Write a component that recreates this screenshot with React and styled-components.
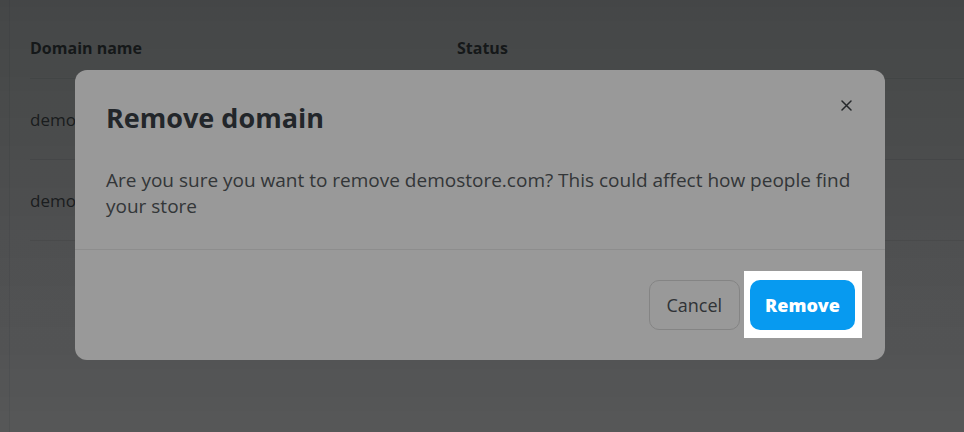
import styled, { createGlobalStyle } from "styled-components";

const GlobalStyle = createGlobalStyle`
  html, body {
    margin: 0;
    padding: 0;
    height: 100%;
    overflow: hidden;
    background: #ffffff;
    font-family: "Open Sans", "Noto Sans", Arial, sans-serif;
  }
`;

const Page = styled.div`
  min-height: 100vh;
  margin-left: 9px;
  border-left: 1px solid #eceef0;
  padding: 36px 0 0 20px;
  box-sizing: border-box;
`;

const TableHead = styled.div`
  display: grid;
  grid-template-columns: 427px 1fr;
  padding-bottom: 18px;
  border-bottom: 1px solid #e8e9ea;
  font-size: 16px;
  font-weight: 700;
  line-height: 24px;
  color: #3b3f42;
`;

const TableRow = styled.div`
  display: grid;
  grid-template-columns: 427px 1fr;
  align-items: center;
  height: 80px;
  border-bottom: 1px solid #e8e9ea;
  font-size: 17px;
  color: #4a4d50;
`;

const Backdrop = styled.div`
  position: fixed;
  inset: 0;
  display: flex;
  align-items: center;
  justify-content: center;
  padding: 0 4px 2px 0;
  background: linear-gradient(
    180deg,
    rgba(22, 26, 28, 0.6) 0%,
    rgba(22, 26, 28, 0.48) 100%
  );
`;

const Modal = styled.div`
  position: relative;
  width: 810px;
  background: #ffffff;
  border-radius: 12px;
`;

const ModalHeader = styled.div`
  display: flex;
  align-items: flex-start;
  justify-content: space-between;
  padding: 28px 29px 0 31px;
`;

const Title = styled.h2`
  margin: 0;
  font-size: 27px;
  line-height: 40px;
  font-weight: 700;
  color: #3a4047;
`;

const CloseButton = styled.button`
  display: flex;
  align-items: center;
  justify-content: center;
  width: 20px;
  height: 20px;
  margin-top: -3px;
  padding: 0;
  border: none;
  background: none;
  color: #3f4448;
  cursor: pointer;
`;

const Body = styled.p`
  margin: 0;
  padding: 29px 30px 30px 31px;
  font-size: 19px;
  line-height: 26px;
  color: #555a5e;
  border-bottom: 1px solid #ececec;
`;

const Footer = styled.div`
  display: flex;
  justify-content: flex-end;
  align-items: center;
  gap: 4px;
  padding: 30px;
`;

const CancelButton = styled.button`
  height: 50px;
  padding: 0 17px 0 16px;
  border: 1px solid #dcdcdc;
  border-radius: 10px;
  background: #ffffff;
  font-family: inherit;
  font-size: 18px;
  color: #50555a;
  cursor: pointer;
`;

const Spotlight = styled.span`
  position: relative;
  z-index: 2;
  display: inline-flex;
  margin-left: 6px;

  &::before {
    content: "";
    position: absolute;
    top: -9px;
    bottom: -8px;
    left: -6px;
    right: -7px;
    z-index: -1;
    background: #ffffff;
    box-shadow: 0 0 0 3000px rgba(0, 0, 0, 0.4);
  }
`;

const RemoveButton = styled.button`
  height: 50px;
  padding: 0 15px;
  border: none;
  border-radius: 10px;
  background: #079af0;
  font-family: inherit;
  font-size: 18px;
  font-weight: 800;
  color: #ffffff;
  cursor: pointer;
`;

const domains = [
  { name: "demostore.com", status: "Connected" },
  { name: "demostore.myshop.io", status: "Primary" },
];

export default function App() {
  return (
    <>
      <GlobalStyle />
      <Page>
        <TableHead>
          <div>Domain name</div>
          <div>Status</div>
        </TableHead>
        {domains.map((d) => (
          <TableRow key={d.name}>
            <div>{d.name}</div>
            <div>{d.status}</div>
          </TableRow>
        ))}
      </Page>

      <Backdrop>
        <Modal role="dialog">
          <ModalHeader>
            <Title>Remove domain</Title>
            <CloseButton aria-label="Close">
              <svg width="11" height="11" viewBox="0 0 11 11">
                <path
                  d="M1 1L10 10M10 1L1 10"
                  stroke="currentColor"
                  strokeWidth="1.5"
                  strokeLinecap="round"
                />
              </svg>
            </CloseButton>
          </ModalHeader>
          <Body>
            Are you sure you want to remove demostore.com? This could affect
            how people find your store
          </Body>
          <Footer>
            <CancelButton>Cancel</CancelButton>
            <Spotlight>
              <RemoveButton>Remove</RemoveButton>
            </Spotlight>
          </Footer>
        </Modal>
      </Backdrop>
    </>
  );
}
